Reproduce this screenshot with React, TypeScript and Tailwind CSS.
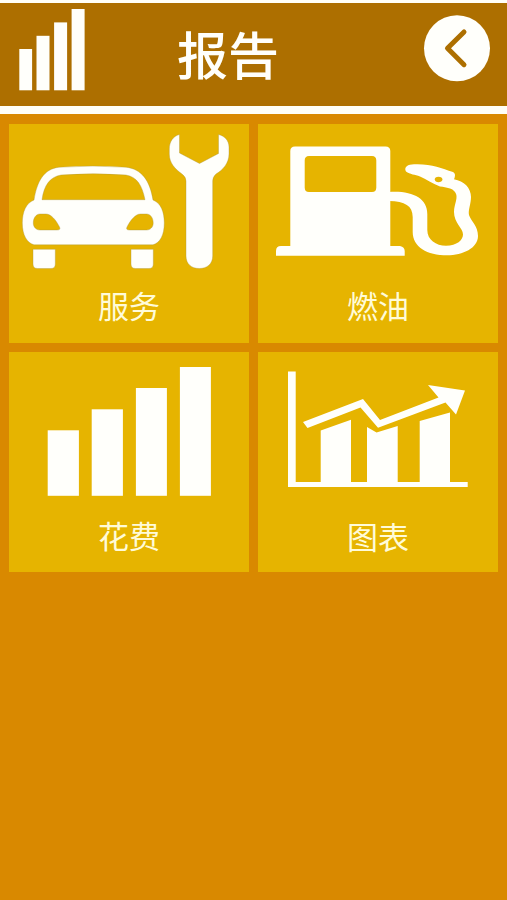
import type { ReactNode } from "react";

function SignalBars() {
  return (
    <svg className="h-[82px] w-[66px]" viewBox="19 9 66 82" fill="#fffffb">
      <rect x="19.3" y="49" width="12.8" height="41.3" />
      <rect x="36.5" y="35.8" width="13" height="54.5" />
      <rect x="54.1" y="22.4" width="13" height="67.9" />
      <rect x="71.6" y="9" width="13" height="81.3" />
    </svg>
  );
}

function ServiceIcon() {
  return (
    <svg className="h-[160px] w-full" viewBox="9 124 240 160" fill="#fffffb">
      <g stroke="#ab9640" strokeOpacity="0.55" strokeWidth="0.7">
        <path
          fillRule="evenodd"
          d="M34 200C37 181 44 169 59 167.2Q93 165 126 167.2C142 169 150 181 153 200C161 203 164.3 212 164.3 223C164.3 235 160 243 153 244.8H34C27 243 22.3 235 22.3 223C22.3 212 26 203 34 200ZM42 199.7H145C142 185 137 177 126 175Q93 172.5 61 175C50 177 44 185 42 199.7ZM40 214C36 214 33.3 218 33.3 223C33.3 227 36 230 40 230H57Q61 230 59.5 227C56 220 51 214 46 214ZM146.5 214C150.5 214 153.2 218 153.2 223C153.2 227 150.5 230 146.5 230H129.5Q125.5 230 127 227C130.5 220 135.5 214 140.5 214Z"
        />
        <path d="M33 249.3H55.3V264Q55.3 268.5 51 268.5H37.5Q33 268.5 33 264Z" />
        <path d="M131 249.3H153.3V264Q153.3 268.5 149 268.5H135.5Q131 268.5 131 264Z" />
        <path d="M179.5 134.5V153L199.5 163.5L218.5 153.5V134.5C225 136 229 141 229 147V154C229 163 223 170 216 174Q212.7 177 212.7 181V256C212.7 264 207 268.5 199.3 268.5C191.5 268.5 186 264 186 256V181Q186 177 182 174C175 169 169.3 163 169.3 154V149C169.3 142 173 136 179.5 134.5Z" />
      </g>
    </svg>
  );
}

function FuelIcon() {
  return (
    <svg className="h-[160px] w-full" viewBox="258 124 240 160" fill="#fffffb">
      <path
        fillRule="evenodd"
        d="M295 146.5H385.5Q390.3 146.5 390.3 151V246H400Q404.7 247 404.7 251V255.7H276V251Q276 246 281 246H290.3V151Q290.3 146.5 295 146.5ZM309 156Q304.7 156 304.7 160.5V187.5Q304.7 192 309 192H372Q376.3 192 376.3 187.5V160.5Q376.3 156 372 156Z"
      />
      <path
        fillRule="evenodd"
        d="M389 192C412 190.5 427.3 198 427.3 214V230C427.3 240 436 245.7 446 245.7C457 245.7 463 240 463 234.5C463 228 454 223 454 212C454 204 459 197 455 192C452 188 447 187.5 440 186.5C433 184 427 179.5 420 176.5C415 174.5 410 174.5 406 171.5C403.5 167 408 164.2 414 164.2C431 163.5 441 168 453 172C456 173.5 455 177 454 179.3C464 181 471 188 471 197C471 204 468 210 469 215C471 221 478 226 478 236C478 248 463 255.3 447 255.3C427 255.3 412.7 247 412.7 232V217C412.7 206 405 201 389 201ZM438.5 176.8C436 176.8 434.7 178 434.7 179.5C434.7 181 436.5 182.3 438.5 182.3C440.5 182.3 442.5 181 442.5 179.5C442.5 178 441 176.8 438.5 176.8Z"
      />
    </svg>
  );
}

function CostIcon() {
  return (
    <svg className="h-[160px] w-full" viewBox="9 352 240 160" fill="#fffffb">
      <rect x="47.7" y="430.3" width="31.2" height="65.5" />
      <rect x="91.7" y="409.3" width="31.2" height="86.5" />
      <rect x="135.9" y="388" width="31" height="107.8" />
      <rect x="179.9" y="367" width="31" height="128.8" />
    </svg>
  );
}

function ChartIcon() {
  return (
    <svg className="h-[160px] w-full" viewBox="258 352 240 160" fill="#fffffb">
      <path d="M288 371.5H295.7V482H467.7V487H288Z" />
      <path d="M320.7 430.5L351 419.7V483H320.7Z" />
      <path d="M367 427L376.5 432.5L397.7 426V483H367Z" />
      <path d="M419.7 421L450 412.5V483H419.7Z" />
      <path d="M303 422L363 399L380 420L438.5 397.5L428 385L465 390.5L456 414.5L445.5 402.5L378 427.7L360.5 407.5L307.5 428Z" />
    </svg>
  );
}

function Tile({ label, labelClass, children }: { label: string; labelClass: string; children: ReactNode }) {
  return (
    <button className="flex flex-col items-center bg-[#e6b400]">
      {children}
      <span className={`text-[31px] text-[#fffbd8] ${labelClass}`}>{label}</span>
    </button>
  );
}

export default function App() {
  return (
    <div className="h-[900px] w-[507px] overflow-hidden bg-[#d98900] font-['Noto_Sans_CJK_SC',sans-serif]">
      <header className="flex h-[114px] items-start border-t-[3px] border-b-8 border-[#fffff8] bg-[#ad6f00] pt-[6px] pr-[17px] pl-[19px]">
        <SignalBars />
        <h1 className="mt-[6px] ml-[92px] text-[51px] leading-[76px] font-medium text-[#fffffb]">报告</h1>
        <button aria-label="返回" className="mt-[6px] ml-auto">
          <svg className="size-[67px]" viewBox="0 0 67 67">
            <circle cx="34" cy="33.3" r="33" fill="#fffffb" />
            <path d="M41 17L24.5 33.3L41 49.7" fill="none" stroke="#ad6f00" strokeWidth="5" strokeLinecap="round" strokeLinejoin="round" />
          </svg>
        </button>
      </header>
      <main className="grid grid-cols-[240px_240px] grid-rows-[219px_220px] gap-[9px] px-[9px] pt-[10px]">
        <Tile label="服务" labelClass="leading-[42px]"><ServiceIcon /></Tile>
        <Tile label="燃油" labelClass="leading-[42px]"><FuelIcon /></Tile>
        <Tile label="花费" labelClass="leading-[46px]"><CostIcon /></Tile>
        <Tile label="图表" labelClass="leading-[48px]"><ChartIcon /></Tile>
      </main>
    </div>
  );
}
